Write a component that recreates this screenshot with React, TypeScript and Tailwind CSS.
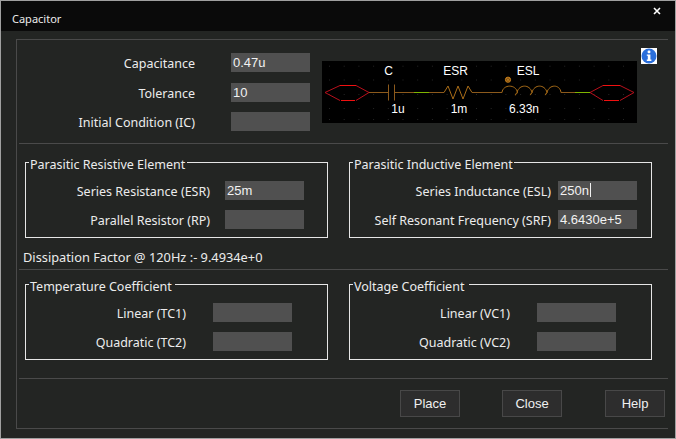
const Field = ({ value, caret }: { value?: string; caret?: boolean }) => (
  <div className="flex h-[19px] w-[79px] items-center bg-[#505050] pl-[2px] pb-[1px] font-['Liberation_Sans',Arial,sans-serif] text-[13px] leading-none text-[#f2f2f2]">
    {value}
    {caret && <span className="ml-[1px] h-[14px] w-[1px] bg-[#f0f0f0]" />}
  </div>
);

const Row = ({ label, labelW, gap, value, caret, mt }: { label: string; labelW: string; gap: string; value?: string; caret?: boolean; mt?: string }) => (
  <div className={`flex items-center ${mt ?? ""}`}>
    <div className={`${labelW} ${gap} h-[19px] whitespace-nowrap pt-[1px] text-right text-[12.5px] leading-[19px] text-[#ececec]`}>{label}</div>
    <Field value={value} caret={caret} />
  </div>
);

const Group = ({ title, titleW, children }: { title: string; titleW: string; children: React.ReactNode }) => (
  <div className="relative h-[76px] w-[303px] border border-[#e6e6e6] pt-[18px]">
    <div className={`absolute left-[3px] top-[-6px] ${titleW} bg-[#232523] pl-[1px] text-[12.5px] leading-[16px] whitespace-nowrap text-[#ececec]`}>{title}</div>
    {children}
  </div>
);

const Btn = ({ children, className }: { children: string; className?: string }) => (
  <button className={`h-[27px] w-[60px] border border-[#484848] bg-[#2d2d2d] font-['Liberation_Sans',Arial,sans-serif] text-[13px] text-[#f0f0f0] ${className ?? ""}`}>{children}</button>
);

const Schematic = () => {
  const xs = Array.from({ length: 22 }, (_, i) => 7 + i * 14.7);
  const ys = [4.7, 18.5, 33, 47, 58];
  const hex = (a: number, b: number, c: number, d: number) => (
    <g fill="none">
      <polyline points={`${b},24.5 ${a},31.5 ${b},39.5`} stroke="#b8101c" strokeWidth="1" />
      <polyline points={`${c},24.5 ${d},31.5 ${c},39.5`} stroke="#b8101c" strokeWidth="1" />
      <path d={`M${b} 24.5H${c}M${b + 1} 39.5H${c - 1}`} stroke="#f01010" strokeWidth="1" />
    </g>
  );
  const wire = "#8c5a1c";
  const t = "font-['Liberation_Sans',Arial,sans-serif] text-[12px]";
  return (
    <svg width="315" height="62" viewBox="0 0 315 62" className="block bg-black">
      {ys.map((y) => xs.map((x) => <rect key={`${x}-${y}`} x={x} y={y} width="1" height="1" fill="#262626" />))}
      {hex(3, 18, 34, 47)}
      {hex(268, 281, 298, 312)}
      <path d="M47 31.5H66.5M72.5 31.5H92M107 31.5H122M150 31.5H180M239 31.5H253" stroke={wire} fill="none" />
      <path d="M92 31.5H107M253 31.5H268" stroke="#7fb400" fill="none" />
      <path d="M66.5 23.5V39.5M72.5 23.5V39.5" stroke={wire} strokeWidth="1" fill="none" />
      <path d="M122 31.5L126 25L131 38L136 25L141 38L146 25L150 31.5" stroke="#a86c18" fill="none" />
      <path d="M180 31.5C181 23 194 23 195.5 31.5C193 35 192 35 195 31.5C197 23 208 23 210 31.5C208 35 207 35 210 31.5C212 23 223 23 225 31.5C223 35 222 35 225 31.5C227 23 238 23 239 31.5" stroke="#a86c18" fill="none" />
      <circle cx="186" cy="18.7" r="2.6" fill="#7a4c10" stroke="#c47c18" />
      <path d="M184.5 17.2L187.5 20.2M187.5 17.2L184.5 20.2" stroke="#e09a30" strokeWidth="0.6" />
      <g fill="#ffffff" textAnchor="middle">
        <text x="66.7" y="14" className={t}>C</text>
        <text x="133.7" y="14" className={t}>ESR</text>
        <text x="206" y="14" className={t}>ESL</text>
        <text x="76" y="52" className={t}>1u</text>
        <text x="137" y="52" className={t}>1m</text>
        <text x="202" y="52" className={t}>6.33n</text>
      </g>
    </svg>
  );
};

const InfoIcon = () => (
  <svg width="16" height="16" viewBox="0 0 16 16" className="block bg-white">
    <circle cx="8" cy="8" r="7.5" fill="#2a6fdc" />
    <rect x="6.6" y="2.6" width="2.8" height="2.6" rx="1" fill="#fff" />
    <path d="M5.8 6.4H9.4V11.6H10.4V13H5.8V11.6H6.8V7.8H5.8Z" fill="#fff" />
  </svg>
);

export default function App() {
  return (
    <div className="flex h-[439px] w-[676px] flex-col overflow-hidden border border-[#a0a0a0] bg-[#232523] font-['Noto_Sans','Open_Sans',sans-serif]">
      <div className="flex h-[30px] shrink-0 items-center justify-between bg-[#0a0a0a] pl-[11px] pr-[14px] text-[11px] text-[#ececec]">
        <span className="mt-[6px]">Capacitor</span>
        <svg width="8" height="8" viewBox="0 0 8 8" className="mb-[10px]">
          <path d="M1 1L7 7M7 1L1 7" stroke="#fff" strokeWidth="1.6" />
        </svg>
      </div>

      <div className="ml-[15px] mt-[8px] flex h-[390px] w-[652px] flex-col border-b border-l border-t border-[#4a4a4a]">
        <section className="ml-[2px] flex h-[104px] shrink-0 border-b border-[#4a4a4a]">
          <div className="flex w-[291px] flex-col pt-[13px]">
            <Row label="Capacitance" labelW="w-[176px]" gap="mr-[36px]" value="0.47u" />
            <Row label="Tolerance" labelW="w-[176px]" gap="mr-[36px]" value="10" mt="mt-[11px]" />
            <Row label="Initial Condition (IC)" labelW="w-[176px]" gap="mr-[36px]" mt="mt-[10px]" />
          </div>
          <div className="ml-[12px] mt-[21px]"><Schematic /></div>
          <div className="ml-[4px] mt-[8px]"><InfoIcon /></div>
        </section>

        <section className="ml-[2px] h-[126px] shrink-0 border-b border-[#4a4a4a] pl-[6px] pt-[18px]">
          <div className="flex gap-[21px]">
            <Group title="Parasitic Resistive Element" titleW="w-[158px]">
              <Row label="Series Resistance (ESR)" labelW="w-[184px]" gap="mr-[15px]" value="25m" />
              <Row label="Parallel Resistor (RP)" labelW="w-[184px]" gap="mr-[15px]" mt="mt-[10px]" />
            </Group>
            <Group title="Parasitic Inductive Element" titleW="w-[161px]">
              <Row label="Series Inductance (ESL)" labelW="w-[201px]" gap="mr-[7px]" value="250n" caret />
              <Row label="Self Resonant Frequency (SRF)" labelW="w-[201px]" gap="mr-[7px]" value="4.6430e+5" mt="mt-[10px]" />
            </Group>
          </div>
          <div className="ml-[-2px] mt-[11px] text-[12.8px] leading-[16px] text-[#ececec]">Dissipation Factor @ 120Hz :- 9.4934e+0</div>
        </section>

        <section className="ml-[2px] h-[109px] shrink-0 border-b border-[#4a4a4a] pl-[6px] pt-[14px]">
          <div className="flex gap-[21px]">
            <Group title="Temperature Coefficient" titleW="w-[146px]">
              <Row label="Linear (TC1)" labelW="w-[160px]" gap="mr-[27px]" />
              <Row label="Quadratic (TC2)" labelW="w-[160px]" gap="mr-[27px]" mt="mt-[10px]" />
            </Group>
            <Group title="Voltage Coefficient" titleW="w-[116px]">
              <Row label="Linear (VC1)" labelW="w-[160px]" gap="mr-[27px]" />
              <Row label="Quadratic (VC2)" labelW="w-[160px]" gap="mr-[27px]" mt="mt-[10px]" />
            </Group>
          </div>
        </section>

        <section className="flex justify-end pr-[3px] pt-[11px]">
          <Btn>Place</Btn>
          <Btn className="ml-[42px]">Close</Btn>
          <Btn className="ml-[43px]">Help</Btn>
        </section>
      </div>
    </div>
  );
}
